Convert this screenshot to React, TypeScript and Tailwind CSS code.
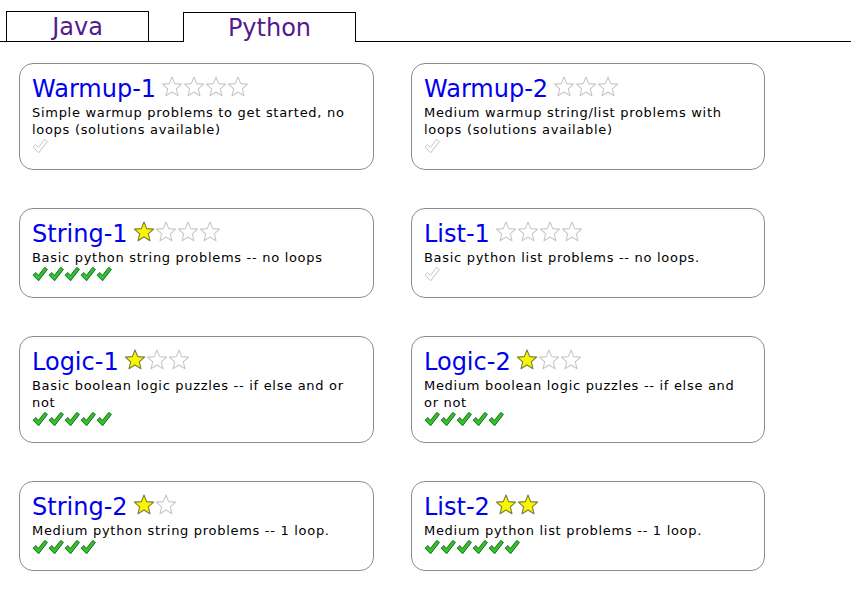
import React from 'react'

type Section = {
  name: string
  filled: number
  stars: number
  desc: string
  done: number
}

const sections: Section[] = [
  { name: 'Warmup-1', filled: 0, stars: 4, desc: 'Simple warmup problems to get started, no loops (solutions available)', done: 0 },
  { name: 'Warmup-2', filled: 0, stars: 3, desc: 'Medium warmup string/list problems with loops (solutions available)', done: 0 },
  { name: 'String-1', filled: 1, stars: 4, desc: 'Basic python string problems -- no loops', done: 5 },
  { name: 'List-1', filled: 0, stars: 4, desc: 'Basic python list problems -- no loops.', done: 0 },
  { name: 'Logic-1', filled: 1, stars: 3, desc: 'Basic boolean logic puzzles -- if else and or not', done: 5 },
  { name: 'Logic-2', filled: 1, stars: 3, desc: 'Medium boolean logic puzzles -- if else and or not', done: 5 },
  { name: 'String-2', filled: 1, stars: 2, desc: 'Medium python string problems -- 1 loop.', done: 4 },
  { name: 'List-2', filled: 2, stars: 2, desc: 'Medium python list problems -- 1 loop.', done: 6 },
]

const STAR_POINTS =
  '11,1 13.7,7.6 20.6,8.1 15.3,12.8 17,19.8 11,16 5,19.8 6.7,12.8 1.4,8.1 8.3,7.6'

const Star: React.FC<{ on: boolean }> = ({ on }) => (
  <svg width="22" height="21" viewBox="0 0 22 21" className="block mt-[2px]">
    <polygon
      points={STAR_POINTS}
      fill={on ? '#f7f700' : '#ffffff'}
      stroke={on ? '#7a7a3c' : '#c8c8c8'}
      strokeWidth="1.1"
      strokeLinejoin="round"
    />
  </svg>
)

const Check: React.FC<{ on: boolean }> = ({ on }) => (
  <svg width="16" height="16" viewBox="0 0 16 16" className="block">
    <path
      d="M1 9.2 L3.8 6.6 L6.4 9.4 L12.8 1.4 L15.4 3.4 L6.6 14.8 Z"
      fill={on ? '#2ec22e' : '#ffffff'}
      stroke={on ? '#1d6b1d' : '#c4c4c4'}
      strokeWidth="1"
      strokeLinejoin="round"
    />
  </svg>
)

const Card: React.FC<{ s: Section }> = ({ s }) => (
  <div className="border border-[#8c8c8c] rounded-[14px] pt-[10px] pb-[15px] pl-[12px] pr-[12px]">
    <div className="flex items-start h-[30px] whitespace-nowrap">
      <span className="text-[24px] leading-[30px] text-[#0000ee] mr-[5px]">{s.name}</span>
      {Array.from({ length: s.stars }).map((_, i) => (
        <Star key={i} on={i < s.filled} />
      ))}
    </div>
    <p className="text-[13px] leading-[17px] tracking-[0.7px] text-black">{s.desc}</p>
    <div className="flex h-[16px]">
      {s.done === 0 ? (
        <Check on={false} />
      ) : (
        Array.from({ length: s.done }).map((_, i) => <Check key={i} on />)
      )}
    </div>
  </div>
)

export default function App() {
  return (
    <div className="min-h-screen bg-white" style={{ fontFamily: '"DejaVu Sans", Verdana, sans-serif' }}>
      <div className="flex items-end h-[42px] border-b border-black">
        <div className="ml-[6px] w-[143px] h-[30px] border-t border-x border-black flex items-center justify-center text-[24px] text-[#551a8b]">
          Java
        </div>
        <div className="ml-[34px] w-[173px] h-[30px] -mb-px bg-white border-t border-x border-black flex items-center justify-center text-[24px] text-[#551a8b]">
          Python
        </div>
      </div>

      <div className="grid grid-cols-[355px_354px] gap-x-[37px] gap-y-[38px] pl-[19px] pt-[21px] items-start">
        {sections.map((s) => (
          <Card key={s.name} s={s} />
        ))}
      </div>
    </div>
  )
}
